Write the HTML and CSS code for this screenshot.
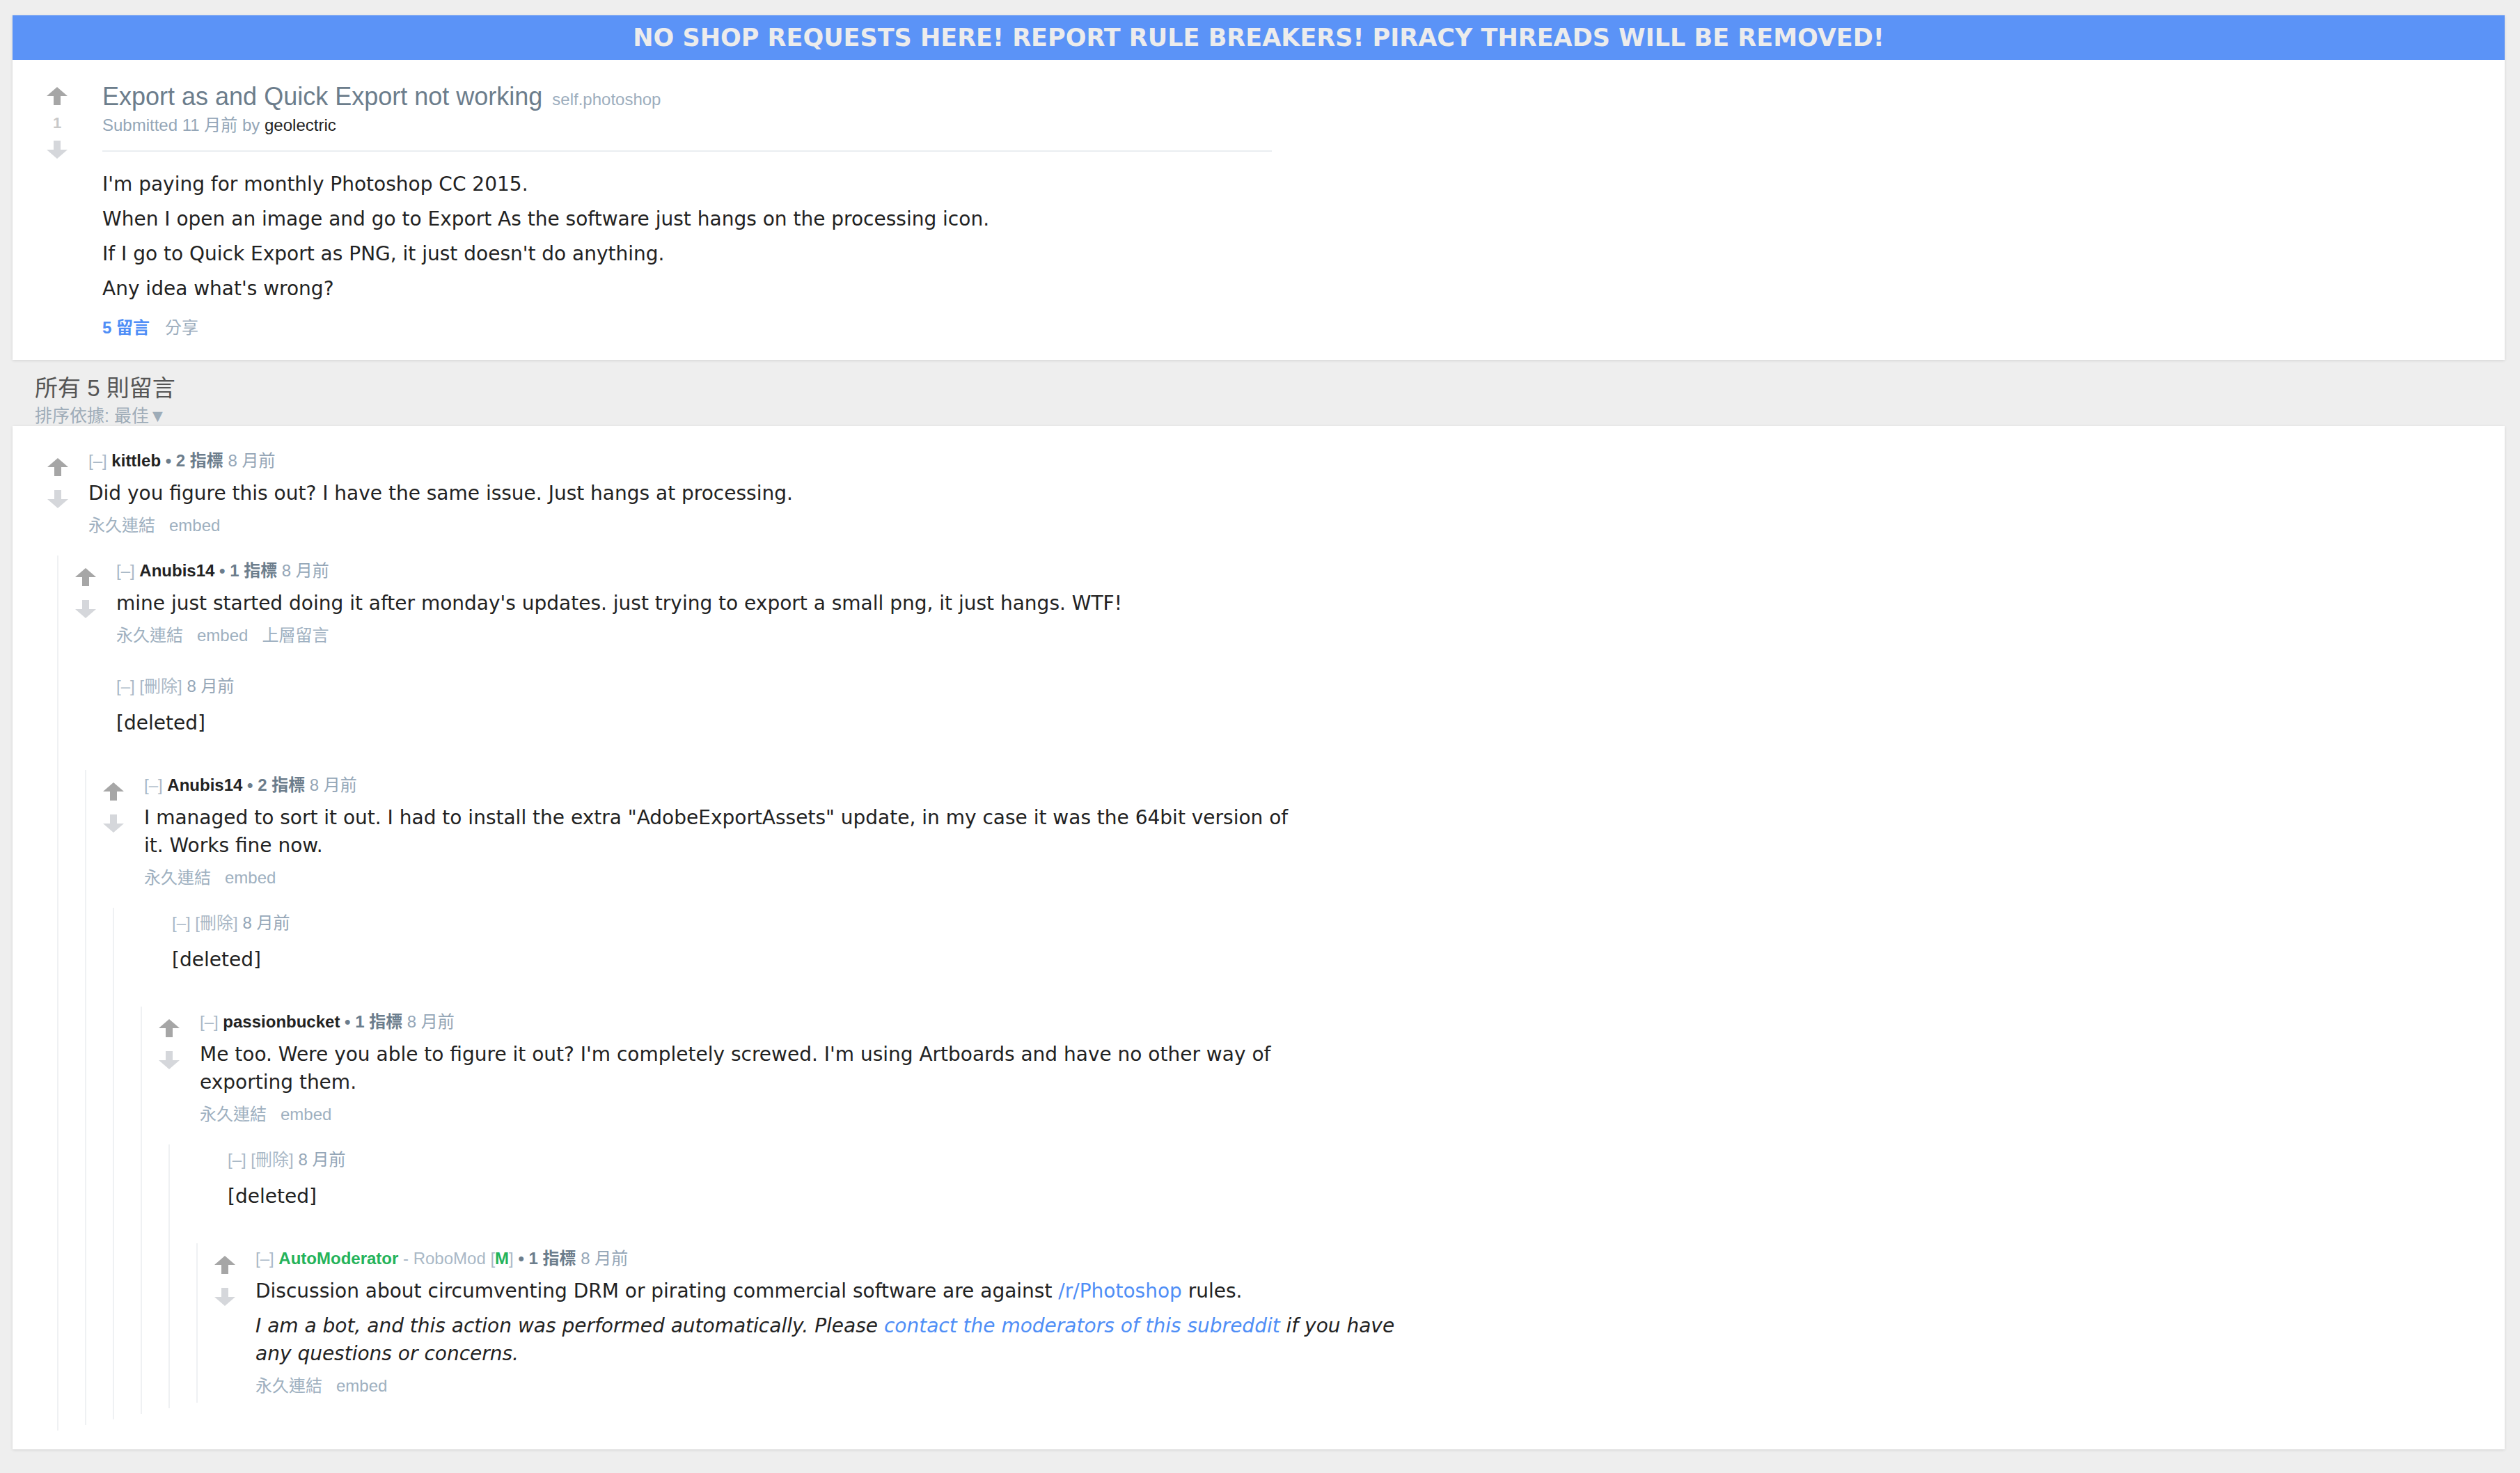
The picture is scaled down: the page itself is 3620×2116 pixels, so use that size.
FILE: index.html
```html
<!DOCTYPE html>
<html lang="zh-Hant">
<head>
    <meta charset="UTF-8">
    <title>Export as and Quick Export not working : photoshop</title>
    <link rel="stylesheet" href="styles.css">
</head>
<body>
    <div class="content">
        <div class="card post-card">
            <div class="banner">NO SHOP REQUESTS HERE! REPORT RULE BREAKERS! PIRACY THREADS WILL BE REMOVED!</div>

            <div class="post">
                <div class="post-votes">
                    <svg class="arrow up" viewBox="0 0 30 26"><path d="M15 0 L30 13 L20 13 L20 26 L10 26 L10 13 L0 13 Z"/></svg>
                    <div class="score">1</div>
                    <svg class="arrow down" viewBox="0 0 30 26"><path d="M10 0 L20 0 L20 13 L30 13 L15 26 L0 13 L10 13 Z"/></svg>
                </div>
                <div class="post-entry">
                    <p class="post-title"><a href="#">Export as and Quick Export not working</a> <span class="domain">self.photoshop</span></p>
                    <p class="post-tagline">Submitted 11 月前 by <a class="author" href="#">geolectric</a></p>
                    <div class="post-body">
                        <div class="md">
                            <p>I'm paying for monthly Photoshop CC 2015.</p>
                            <p>When I open an image and go to Export As the software just hangs on the processing icon.</p>
                            <p>If I go to Quick Export as PNG, it just doesn't do anything.</p>
                            <p>Any idea what's wrong?</p>
                        </div>
                    </div>
                    <ul class="flat-list post-buttons">
                        <li><a class="comments-link" href="#">5 留言</a></li>
                        <li><a href="#">分享</a></li>
                    </ul>
                </div>
            </div>
        </div>

        <div class="panestack-title">
            <div class="pane-title">所有 5 則留言</div>
            <div class="sort">排序依據: 最佳▼</div>
        </div>

        <div class="card comment-area">
            <!-- kittleb -->
            <div class="comment">
                <div class="comment-row">
                    <div class="midcol">
                        <svg class="arrow up" viewBox="0 0 30 26"><path d="M15 0 L30 13 L20 13 L20 26 L10 26 L10 13 L0 13 Z"/></svg>
                        <svg class="arrow down" viewBox="0 0 30 26"><path d="M10 0 L20 0 L20 13 L30 13 L15 26 L0 13 L10 13 Z"/></svg>
                    </div>
                    <div class="entry">
                        <p class="tagline"><span class="expand">[–]</span> <a class="author" href="#">kittleb</a> <span class="score-pts">• 2 指標</span> <span class="time">8 月前</span></p>
                        <div class="md"><p>Did you figure this out? I have the same issue. Just hangs at processing.</p></div>
                        <ul class="flat-list"><li>永久連結</li><li>embed</li></ul>
                    </div>
                </div>

                <div class="child">
                    <!-- Anubis14 -->
                    <div class="comment">
                        <div class="comment-row">
                            <div class="midcol">
                                <svg class="arrow up" viewBox="0 0 30 26"><path d="M15 0 L30 13 L20 13 L20 26 L10 26 L10 13 L0 13 Z"/></svg>
                                <svg class="arrow down" viewBox="0 0 30 26"><path d="M10 0 L20 0 L20 13 L30 13 L15 26 L0 13 L10 13 Z"/></svg>
                            </div>
                            <div class="entry">
                                <p class="tagline"><span class="expand">[–]</span> <a class="author" href="#">Anubis14</a> <span class="score-pts">• 1 指標</span> <span class="time">8 月前</span></p>
                                <div class="md"><p>mine just started doing it after monday's updates. just trying to export a small png, it just hangs. WTF!</p></div>
                                <ul class="flat-list"><li>永久連結</li><li>embed</li><li>上層留言</li></ul>
                            </div>
                        </div>
                    </div>

                    <!-- deleted -->
                    <div class="comment deleted">
                        <div class="comment-row">
                            <div class="midcol"></div>
                            <div class="entry">
                                <p class="tagline"><span class="expand">[–]</span> <span class="expand">[刪除]</span> <span class="time">8 月前</span></p>
                                <div class="md"><p>[deleted]</p></div>
                            </div>
                        </div>

                        <div class="child">
                            <!-- Anubis14 again -->
                            <div class="comment">
                                <div class="comment-row">
                                    <div class="midcol">
                                        <svg class="arrow up" viewBox="0 0 30 26"><path d="M15 0 L30 13 L20 13 L20 26 L10 26 L10 13 L0 13 Z"/></svg>
                                        <svg class="arrow down" viewBox="0 0 30 26"><path d="M10 0 L20 0 L20 13 L30 13 L15 26 L0 13 L10 13 Z"/></svg>
                                    </div>
                                    <div class="entry">
                                        <p class="tagline"><span class="expand">[–]</span> <a class="author" href="#">Anubis14</a> <span class="score-pts">• 2 指標</span> <span class="time">8 月前</span></p>
                                        <div class="md"><p>I managed to sort it out. I had to install the extra "AdobeExportAssets" update, in my case it was the 64bit version of it. Works fine now.</p></div>
                                        <ul class="flat-list"><li>永久連結</li><li>embed</li></ul>
                                    </div>
                                </div>

                                <div class="child">
                                    <div class="comment deleted">
                                        <div class="comment-row">
                                            <div class="midcol"></div>
                                            <div class="entry">
                                                <p class="tagline"><span class="expand">[–]</span> <span class="expand">[刪除]</span> <span class="time">8 月前</span></p>
                                                <div class="md"><p>[deleted]</p></div>
                                            </div>
                                        </div>

                                        <div class="child">
                                            <!-- passionbucket -->
                                            <div class="comment">
                                                <div class="comment-row">
                                                    <div class="midcol">
                                                        <svg class="arrow up" viewBox="0 0 30 26"><path d="M15 0 L30 13 L20 13 L20 26 L10 26 L10 13 L0 13 Z"/></svg>
                                                        <svg class="arrow down" viewBox="0 0 30 26"><path d="M10 0 L20 0 L20 13 L30 13 L15 26 L0 13 L10 13 Z"/></svg>
                                                    </div>
                                                    <div class="entry">
                                                        <p class="tagline"><span class="expand">[–]</span> <a class="author" href="#">passionbucket</a> <span class="score-pts">• 1 指標</span> <span class="time">8 月前</span></p>
                                                        <div class="md"><p>Me too. Were you able to figure it out? I'm completely screwed. I'm using Artboards and have no other way of exporting them.</p></div>
                                                        <ul class="flat-list"><li>永久連結</li><li>embed</li></ul>
                                                    </div>
                                                </div>

                                                <div class="child">
                                                    <div class="comment deleted">
                                                        <div class="comment-row">
                                                            <div class="midcol"></div>
                                                            <div class="entry">
                                                                <p class="tagline"><span class="expand">[–]</span> <span class="expand">[刪除]</span> <span class="time">8 月前</span></p>
                                                                <div class="md"><p>[deleted]</p></div>
                                                            </div>
                                                        </div>

                                                        <div class="child">
                                                            <!-- AutoModerator -->
                                                            <div class="comment">
                                                                <div class="comment-row">
                                                                    <div class="midcol">
                                                                        <svg class="arrow up" viewBox="0 0 30 26"><path d="M15 0 L30 13 L20 13 L20 26 L10 26 L10 13 L0 13 Z"/></svg>
                                                                        <svg class="arrow down" viewBox="0 0 30 26"><path d="M10 0 L20 0 L20 13 L30 13 L15 26 L0 13 L10 13 Z"/></svg>
                                                                    </div>
                                                                    <div class="entry">
                                                                        <p class="tagline"><span class="expand">[–]</span> <a class="author moderator" href="#">AutoModerator</a> <span class="flair-sep">-</span> <span class="flair">RoboMod</span> <span class="expand">[<span class="mod-tag">M</span>]</span> <span class="score-pts">• 1 指標</span> <span class="time">8 月前</span></p>
                                                                        <div class="md">
                                                                            <p>Discussion about circumventing DRM or pirating commercial software are against <a href="#">/r/Photoshop</a> rules.</p>
                                                                            <p class="bot-note">I am a bot, and this action was performed automatically. Please <a href="#">contact the moderators of this subreddit</a> if you have any questions or concerns.</p>
                                                                        </div>
                                                                        <ul class="flat-list"><li>永久連結</li><li>embed</li></ul>
                                                                    </div>
                                                                </div>
                                                            </div>
                                                        </div>
                                                    </div>
                                                </div>
                                            </div>
                                        </div>
                                    </div>
                                </div>
                            </div>
                        </div>
                    </div>
                </div>
            </div>
        </div>
    </div>
</body>
</html>
```

FILE: styles.css
```css
:root {
    --page-bg: #eeeeee;
    --banner-blue: #5b93f7;
    --link-blue: #4f8ef6;
    --slate: #6c7d8c;
    --muted: #94a6b7;
    --light-muted: #a9b8c6;
    --text: #222222;
    --mod-green: #25b35a;
}

body {
    margin: 0;
    background-color: var(--page-bg);
    font-family: "Liberation Sans", Arial, "Noto Sans CJK TC", sans-serif;
    color: var(--text);
}

a {
    text-decoration: none;
    color: inherit;
}

p {
    margin: 0;
}

.content {
    margin: 22px 22px 0 18px;
    padding-bottom: 31px;
}

.card {
    background: #ffffff;
    box-shadow: 0 1px 4px rgba(0, 0, 0, 0.12);
}

/* banner */
.banner {
    height: 64px;
    line-height: 64px;
    background-color: var(--banner-blue);
    color: #ececec;
    text-align: center;
    font-family: "DejaVu Sans", Verdana, sans-serif;
    font-weight: bold;
    font-size: 35px;
}

/* post */
.post {
    display: flex;
    padding: 33px 0 30px 26px;
}

.post-votes {
    width: 103px;
    flex-shrink: 0;
    padding-top: 6px;
    padding-left: 23px;
    box-sizing: border-box;
    display: flex;
    flex-direction: column;
    align-items: flex-start;
}

.post-votes .score {
    width: 30px;
    text-align: center;
    margin: 14px 0 13px;
    font-size: 22px;
    line-height: 24px;
    font-weight: bold;
    color: #c8c8c8;
}

.arrow {
    width: 30px;
    height: 26px;
    display: block;
}

.arrow.up { fill: #a6a6a6; }
.arrow.down { fill: #d5d7db; }

.post-entry {
    flex: 1;
}

.post-title {
    font-size: 36px;
    line-height: 40px;
    color: var(--slate);
}

.post-title .domain {
    font-size: 24px;
    color: #9cadbd;
    margin-left: 4px;
}

.post-tagline {
    margin-top: 3px;
    font-size: 24px;
    line-height: 28px;
    color: var(--muted);
}

.post-tagline .author {
    color: var(--text);
}

.post-body {
    max-width: 1680px;
    margin-top: 22px;
    padding-top: 27px;
    border-top: 2px solid #eaeef1;
}

/* markdown text */
.md {
    max-width: 1665px;
    font-family: "DejaVu Sans", Verdana, sans-serif;
    font-size: 28px;
    line-height: 40px;
    color: var(--text);
}

.md p {
    margin: 10px 0;
}

.md p:first-child { margin-top: 0; }
.md p:last-child { margin-bottom: 0; }

.md .bot-note {
    font-style: italic;
}

.md a {
    color: var(--link-blue);
}

.flat-list {
    list-style: none;
    margin: 10px 0 0;
    padding: 0;
    display: flex;
    gap: 20px;
    font-size: 24px;
    line-height: 32px;
    color: #9eb0c0;
}

.post-buttons {
    margin-top: 20px;
    gap: 22px;
}

.post-buttons a {
    color: #9cadbd;
}

.post-buttons .comments-link {
    color: var(--link-blue);
    font-weight: bold;
}

/* comment heading */
.panestack-title {
    padding: 23px 0 3px 32px;
}

.pane-title {
    font-size: 33px;
    line-height: 36px;
    color: #555555;
}

.sort {
    margin-top: 9px;
    font-size: 25px;
    line-height: 24px;
    color: #9eacb8;
}

/* comments */
.comment-area {
    padding: 28px 0 27px 26px;
}

.comment {
    padding-top: 10px;
}

.comment + .comment {
    margin-top: 35px;
}

.comment-row {
    display: flex;
}

.midcol {
    width: 83px;
    flex-shrink: 0;
    padding: 8px 0 0 24px;
    box-sizing: border-box;
}

.midcol .arrow.down {
    margin-top: 20px;
}

.entry {
    flex: 1;
}

.tagline {
    font-size: 24px;
    line-height: 24px;
    color: var(--muted);
}

.tagline .expand {
    color: var(--light-muted);
}

.tagline .author {
    color: var(--text);
    font-weight: bold;
}

.tagline .author.moderator {
    color: var(--mod-green);
}

.tagline .score-pts {
    color: var(--slate);
    font-weight: bold;
}

.tagline .flair {
    color: var(--light-muted);
}

.tagline .flair-sep {
    color: var(--light-muted);
}

.tagline .mod-tag {
    color: var(--mod-green);
    font-weight: bold;
}

.entry .md {
    margin-top: 15px;
}

.deleted > .comment-row .md {
    margin-top: 21px;
    margin-bottom: 20px;
}

.child {
    margin: 27px 0 0 38px;
    padding-bottom: 8px;
    border-left: 2px solid #eff1f3;
}
```
